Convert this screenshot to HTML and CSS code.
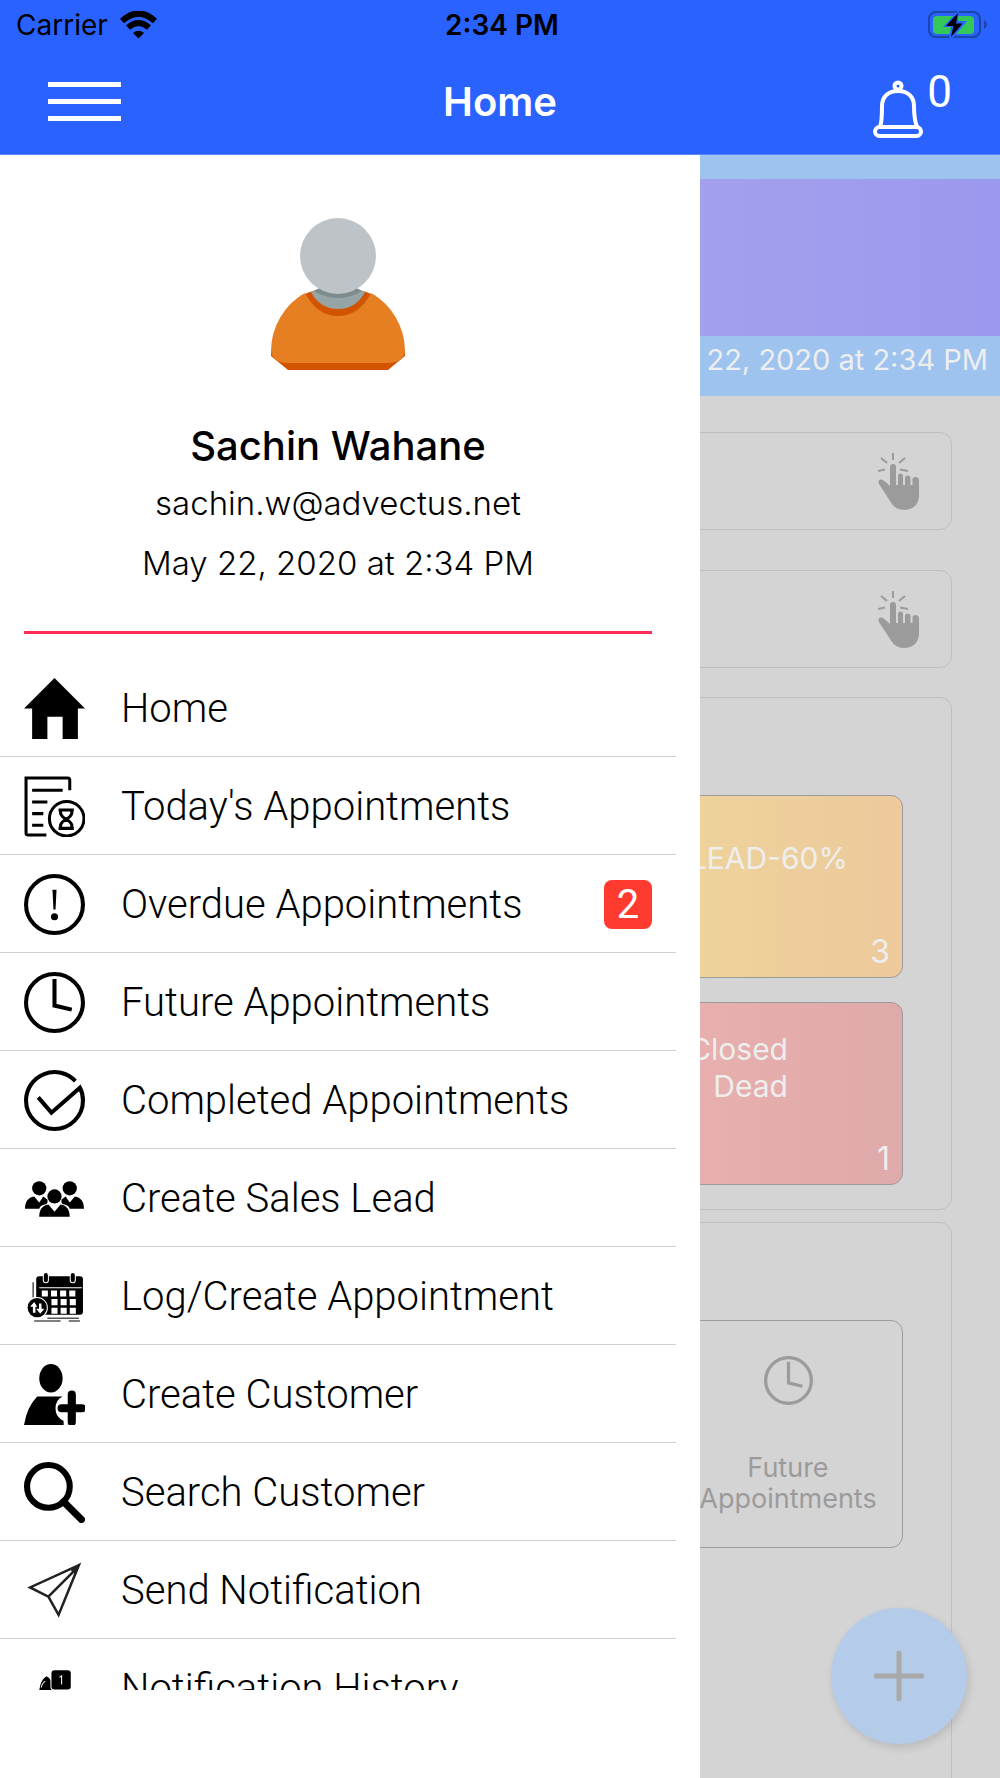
FILE: index.html
```html
<!DOCTYPE html>
<html lang="en">
<head>
    <meta charset="utf-8">
    <meta name="viewport" content="width=device-width, initial-scale=1.0">
    <title>Home</title>
    <link rel="stylesheet" href="styles.css">
</head>

<body>
    <header class="header">
        <div class="status-bar">
            <div class="carrier">
                <span>Carrier</span>
                <svg class="wifi" viewBox="0 0 37 28" aria-hidden="true">
                    <path d="M2 10Q18.500 -5 35 10" fill="none" stroke="#000" stroke-width="6" />
                    <path d="M8 16.500Q18.500 7.500 29 16.500" fill="none" stroke="#000" stroke-width="6" />
                    <path d="M13 22Q18.500 17.500 24 22L18.500 27.500Z" />
                </svg>
            </div>
            <div class="clock">2:34 PM</div>
            <svg class="battery" viewBox="0 0 60 30" aria-hidden="true">
                <rect x="1" y="2" width="51" height="25" rx="7" fill="none" stroke="#1b45a8" stroke-width="2" />
                <rect x="5" y="6" width="41" height="18" rx="4" fill="#34c759" />
                <path d="M56 10Q59 12 59 14.500Q59 17 56 19Z" fill="#1b45a8" />
                <path d="M31 0L15 17H23L21 29H24L39 11H30L31 0Z" fill="#2962ff" />
                <path d="M30 3L18 16H25.500L23 27L34.500 13.500H28Z" />
            </svg>
        </div>
        <div class="nav-bar">
            <button class="menu-button" type="button" aria-label="Menu">
                <span></span><span></span><span></span>
            </button>
            <h1 class="title">Home</h1>
            <button class="bell-button" type="button" aria-label="Notifications">
                <svg class="bell" viewBox="0 0 50 58" aria-hidden="true">
                    <g fill="none" stroke="#fff" stroke-width="4">
                        <circle cx="25" cy="6" r="3.500" />
                        <path d="M7 47C9 42 9 36 9 26C9 16 16 11 25 11C34 11 41 16 41 26C41 36 42 42 44 47" />
                        <rect x="2" y="47" width="46" height="9" rx="4.500" />
                    </g>
                </svg>
                <span class="bell-count">0</span>
            </button>
        </div>
    </header>

    <div class="container">
        <!-- Home screen, dimmed under the drawer -->
        <main class="home">
            <div class="banner"></div>
            <p class="banner-date">22, 2020 at 2:34 PM</p>

            <div class="cards">
                <div class="card tap-card">
                    <svg class="hand" viewBox="0 0 41 57" aria-hidden="true">
                        <path d="M15 0V7M3 5L9 10M27 5L21 10M0 18L7 16.500M22 16.500L30 18" fill="none" stroke="#9b9b9b" stroke-width="2" />
                        <path d="M12 32V14Q12 11 15 11Q18 11 18 14V32H20V23Q20 20.500 22.500 20.500Q25 20.500 25 23V32H27V25Q27 22.500 29.500 22.500Q32.500 22.500 32.500 25V32H34.500V26Q35 24 37.500 24Q40.500 24 41 27V43Q40 56 27 57Q18 57 14 51L1 31Q-1 26 4 26.500Q7 28 12 33Z" fill="#9b9b9b" />
                    </svg>
                </div>
                <div class="card tap-card">
                    <svg class="hand" viewBox="0 0 41 57" aria-hidden="true">
                        <path d="M15 0V7M3 5L9 10M27 5L21 10M0 18L7 16.500M22 16.500L30 18" fill="none" stroke="#9b9b9b" stroke-width="2" />
                        <path d="M12 32V14Q12 11 15 11Q18 11 18 14V32H20V23Q20 20.500 22.500 20.500Q25 20.500 25 23V32H27V25Q27 22.500 29.500 22.500Q32.500 22.500 32.500 25V32H34.500V26Q35 24 37.500 24Q40.500 24 41 27V43Q40 56 27 57Q18 57 14 51L1 31Q-1 26 4 26.500Q7 28 12 33Z" fill="#9b9b9b" />
                    </svg>
                </div>

                <section class="card leads">
                    <div class="tile tile-lead">
                        <span class="tile-name">LEAD-60%</span>
                        <span class="tile-count">3</span>
                    </div>
                    <div class="tile tile-dead">
                        <span class="tile-name">Closed<br>Dead</span>
                        <span class="tile-count">1</span>
                    </div>
                </section>

                <section class="card appointments">
                    <div class="tile tile-future">
                        <svg class="future-icon" viewBox="0 0 60 60" aria-hidden="true">
                            <g fill="none" stroke="#9b9b9b" stroke-width="4">
                                <circle cx="30" cy="30" r="28" />
                                <path d="M30 7V33L47 37" />
                            </g>
                        </svg>
                        <span>Future<br>Appointments</span>
                    </div>
                </section>
            </div>

            <button class="add-button" type="button" aria-label="Add">
                <svg viewBox="0 0 50 50" aria-hidden="true">
                    <path d="M25 2V48M2 25H48" fill="none" stroke="#a9a9a9" stroke-width="5" stroke-linecap="round" />
                </svg>
            </button>
        </main>

        <!-- Side drawer -->
        <aside class="drawer">
            <div class="profile">
                <svg class="avatar" viewBox="0 0 136 152" aria-hidden="true">
                    <path d="M30 78Q68 60 106 78L100 102H36ZM1 133V138L18 152H118L135 138V133Z" fill="#d35400" />
                    <path d="M1 133A67 67 0 0 1 35 75Q47 98 68 98Q89 98 101 75A67 67 0 0 1 135 133Q133 145 118 145H18Q3 145 1 133Z" fill="#e67e22" />
                    <path d="M41 74L50 70H86L95 74Q86 91 68 91Q50 91 41 74Z" fill="#95a5a6" />
                    <path d="M44 73L50 70H86L92 73Q81 80 68 80Q55 80 44 73Z" fill="#7f8c8d" />
                    <circle cx="68" cy="38" r="38" fill="#bdc3c7" />
                </svg>
                <h2 class="name">Sachin Wahane</h2>
                <p class="email">sachin.w@advectus.net</p>
                <p class="date">May 22, 2020 at 2:34 PM</p>
            </div>

            <nav class="menu">
                <a class="menu-item" href="#">
                    <svg class="icon" viewBox="0 0 60 60" aria-hidden="true">
                        <path d="M30 0L60 30H53V60H38V38H23V60H8V30H0Z" />
                    </svg>
                    <span>Home</span>
                </a>
                <a class="menu-item" href="#">
                    <svg class="icon" viewBox="0 0 60 60" aria-hidden="true">
                        <g fill="none" stroke="#000" stroke-width="3">
                            <path d="M45 14V4Q45 2 43 2H2V56Q2 58 4 58H22" />
                            <path d="M8 14H38M8 25.500H23M8 37H19M8 48.500H19" />
                            <circle cx="42" cy="42" r="17" />
                            <path d="M34 33.500H49M34 51.500H49M36 34V37Q37 40 41.500 42.500Q37 45 36 48V51M47 34V37Q46 40 41.500 42.500Q46 45 47 48V51" />
                        </g>
                    </svg>
                    <span>Today's Appointments</span>
                </a>
                <a class="menu-item" href="#">
                    <svg class="icon" viewBox="0 0 60 60" aria-hidden="true">
                        <circle cx="30" cy="30" r="28" fill="none" stroke="#000" stroke-width="4" />
                        <path d="M28 15.500H32L31 35H29Z" />
                        <circle cx="30" cy="42" r="3.500" />
                    </svg>
                    <span>Overdue Appointments</span>
                    <span class="badge">2</span>
                </a>
                <a class="menu-item" href="#">
                    <svg class="icon" viewBox="0 0 60 60" aria-hidden="true">
                        <g fill="none" stroke="#000" stroke-width="4">
                            <circle cx="30" cy="30" r="28" />
                            <path d="M30 7V33L47 37" />
                        </g>
                    </svg>
                    <span>Future Appointments</span>
                </a>
                <a class="menu-item" href="#">
                    <svg class="icon" viewBox="0 0 60 60" aria-hidden="true">
                        <path d="M50.500 11A28 28 0 0 0 2 30A28 28 0 0 0 58 30Q58 23 55 17.500L27 42L14 27" fill="none" stroke="#000" stroke-width="4" />
                    </svg>
                    <span>Completed Appointments</span>
                </a>
                <a class="menu-item" href="#">
                    <svg class="icon" viewBox="0 0 60 60" aria-hidden="true">
                        <circle cx="15" cy="20" r="7" />
                        <circle cx="45" cy="20" r="7" />
                        <path d="M1 40C1 33 4 29 10 28L15 34L19 28L23 31Q24 36 20 36Q16 37 15 40Z" />
                        <path d="M59 40C59 33 56 29 50 28L45 34L41 28L37 31Q36 36 40 36Q44 37 45 40Z" />
                        <circle cx="30" cy="28" r="7" />
                        <path d="M15 48C15 41 18 37 24 36L30 43L36 36C42 37 45 41 45 48Z" />
                    </svg>
                    <span>Create Sales Lead</span>
                </a>
                <a class="menu-item" href="#">
                    <svg class="icon" viewBox="0 0 60 60" aria-hidden="true">
                        <rect x="12" y="10" width="46" height="38" rx="3" />
                        <path d="M15 21.500H57" stroke="#fff" stroke-width="1" />
                        <g stroke-linecap="round">
                            <path d="M21.500 9V14M48 9V14" stroke="#fff" stroke-width="6" />
                            <path d="M21.500 9V14M48 9V14" stroke="#000" stroke-width="4" />
                        </g>
                        <path d="M17.500 27H52M27 35.500H52M27 44H52" stroke="#fff" stroke-width="6" stroke-dasharray="6 3" />
                        <path d="M9 16V31M23 51.500H54M10 54H36M44 54H55" stroke="#555" stroke-width="1.500" />
                        <circle cx="13" cy="41" r="10.500" fill="#fff" />
                        <circle cx="13" cy="41" r="9.500" />
                        <path d="M10 46V38M16 37V44" stroke="#fff" stroke-width="2.500" />
                        <path d="M6 40L10 35.500L13 40ZM12 42H20L16 47Z" fill="#fff" />
                    </svg>
                    <span>Log/Create Appointment</span>
                </a>
                <a class="menu-item" href="#">
                    <svg class="icon" viewBox="0 0 60 60" aria-hidden="true">
                        <ellipse cx="26.500" cy="14" rx="11.500" ry="14" />
                        <path d="M0 60Q3 42 13 32H38Q31 35 31 44Q31 52 39 56V60Z" />
                        <path d="M47 30V57M37 43.500H57" stroke="#000" stroke-width="8" stroke-linecap="round" />
                    </svg>
                    <span>Create Customer</span>
                </a>
                <a class="menu-item" href="#">
                    <svg class="icon" viewBox="0 0 60 60" aria-hidden="true">
                        <circle cx="24" cy="24" r="21" fill="none" stroke="#000" stroke-width="6" />
                        <path d="M39 39L56.500 56.500" stroke="#000" stroke-width="7" stroke-linecap="round" />
                    </svg>
                    <span>Search Customer</span>
                </a>
                <a class="menu-item" href="#">
                    <svg class="icon" viewBox="0 0 60 60" aria-hidden="true">
                        <path d="M54 5L6 27L24 36L34 54ZM24 36L53 7" fill="none" stroke="#222" stroke-width="2.500" />
                        <path d="M55 4L46 10L51 15Z" fill="#222" />
                    </svg>
                    <span>Send Notification</span>
                </a>
                <a class="menu-item" href="#">
                    <svg class="icon" viewBox="0 0 60 60" aria-hidden="true">
                        <path d="M10 46Q14 42 15 32Q16 22 22 18Q27 20 30 30Q40 32 44 46Z" />
                        <path d="M17 29Q18 24 21 23" fill="none" stroke="#fff" stroke-width="1" />
                        <rect x="26" y="11" width="21" height="21" rx="4" fill="#fff" />
                        <rect x="27" y="12" width="19" height="19" rx="3" />
                        <path d="M35 19L37 17.500V26" fill="none" stroke="#fff" stroke-width="1" />
                    </svg>
                    <span>Notification History</span>
                </a>
            </nav>
        </aside>
    </div>
</body>
</html>
```
FILE: styles.css
```css
* {
    box-sizing: border-box;
}

body {
    --blue: #2962ff;
    --dim-bg: #d4d4d4;
    --dim-border: #bfbfbf;
    --dim-text: #9b9b9b;
    --dim-white: #eeeeee;

    margin: 0;
    height: 100vh;
    display: flex;
    flex-direction: column;
    overflow: hidden;
    font-family: Inter, "Liberation Sans", sans-serif;
    color: #000;
    background-color: #fff;
}

h1, h2, p {
    margin: 0;
}

button {
    padding: 0;
    border: none;
    background: none;
    font: inherit;
    color: inherit;
    cursor: pointer;
}

/* Header */
.header {
    background-color: var(--blue);
    border-bottom: 1px solid #5b86ff;
    flex-shrink: 0;
}

.status-bar,
.nav-bar {
    display: grid;
    grid-template-columns: 1fr auto 1fr;
    align-items: center;
}

.status-bar {
    height: 50px;
    padding: 0 12px 0 16px;
    font-size: 28px;
}

.carrier {
    display: flex;
    align-items: center;
    gap: 12px;
}

.wifi {
    width: 37px;
    height: 28px;
}

.clock {
    font-weight: 600;
}

.battery {
    width: 60px;
    height: 30px;
    justify-self: end;
}

.nav-bar {
    height: 104px;
    padding: 0 48px 2px;
}

.menu-button {
    width: 73px;
    display: flex;
    flex-direction: column;
    gap: 12px;
}

.menu-button span {
    height: 5px;
    width: 100%;
    background-color: #fff;
}

.title {
    font-size: 40px;
    font-weight: 600;
    color: #fff;
}

.bell-button {
    justify-self: end;
    display: flex;
    align-items: flex-end;
    gap: 4px;
    padding-top: 6px;
    color: #fff;
}

.bell {
    width: 50px;
    height: 58px;
}

.bell-count {
    font-family: Roboto, sans-serif;
    font-size: 44px;
    line-height: 44px;
    padding-bottom: 24px;
}

/* Drawer lies over the home screen */
.container {
    flex: 1;
    min-height: 0;
    display: grid;
    grid-template-rows: minmax(0, 1fr);
    grid-template-columns: minmax(0, 1fr);
}

.home,
.drawer {
    grid-area: 1 / 1;
}

/* Home screen */
.home {
    position: relative;
    overflow: hidden;
    background-color: var(--dim-bg);
}

.banner {
    height: 181px;
    border-top: 24px solid #9dc3ee;
    background: linear-gradient(90deg, #b5b0ea, #9b99ee);
}

.banner-date {
    height: 60px;
    padding: 7px 12px;
    font-size: 29px;
    line-height: 34px;
    text-align: right;
    color: var(--dim-white);
    background-color: #9dc3ee;
}

.cards {
    padding: 36px 48px 0;
    display: flex;
    flex-direction: column;
}

.card {
    border: 1px solid var(--dim-border);
    border-radius: 12px;
}

.tap-card {
    height: 98px;
    margin-bottom: 40px;
    padding-right: 32px;
    display: flex;
    align-items: center;
    justify-content: flex-end;
}

.tap-card + .leads {
    margin-top: -11px;
}

.hand {
    width: 41px;
    height: 57px;
}

.leads {
    margin-bottom: 12px;
    padding: 97px 48px 24px;
    display: flex;
    flex-direction: column;
    gap: 24px;
}

.tile {
    border: 1px solid var(--dim-text);
    border-radius: 12px;
}

.tile-lead,
.tile-dead {
    height: 183px;
    padding: 12px;
    display: flex;
    flex-direction: column;
    justify-content: space-between;
    align-items: flex-end;
    color: var(--dim-white);
}

.tile-lead {
    background: linear-gradient(90deg, #eedba0, #eed49c 70%, #edc99b);
}

.tile-dead {
    background: linear-gradient(90deg, #edb6b0, #e9b0ae 70%, #dfaaaa);
}

.tile-name {
    font-size: 30px;
    line-height: 37px;
}

.tile-lead .tile-name {
    padding: 32px 42px 0 0;
}

.tile-dead .tile-name {
    padding: 16px 102px 0 0;
    text-align: right;
}

.tile-count {
    font-size: 32px;
    line-height: 26px;
}

.appointments {
    height: 640px;
    padding: 97px 48px 0;
    display: flex;
    justify-content: flex-end;
    align-items: flex-start;
}

.tile-future {
    width: 230px;
    height: 228px;
    padding-top: 35px;
    display: flex;
    flex-direction: column;
    align-items: center;
    gap: 47px;
    font-size: 27px;
    line-height: 31px;
    text-align: center;
    color: var(--dim-text);
}

.future-icon {
    width: 49px;
    height: 49px;
}

.add-button {
    position: absolute;
    right: 33px;
    bottom: 34px;
    width: 136px;
    height: 136px;
    border-radius: 50%;
    background-color: #b4cbe9;
    box-shadow: 2px 4px 8px rgba(0, 0, 0, 0.12);
}

.add-button svg {
    display: block;
    width: 50px;
    height: 50px;
    margin: 0 auto;
}

/* Drawer */
.drawer {
    z-index: 1;
    width: 70%;
    padding-bottom: 88px;
    display: flex;
    flex-direction: column;
    background-color: #fff;
}

.profile {
    height: 479px;
    margin: 0 48px 0 24px;
    padding-top: 63px;
    display: flex;
    flex-direction: column;
    align-items: center;
    border-bottom: 3px solid #ff2d55;
    flex-shrink: 0;
}

.avatar {
    width: 136px;
    height: 152px;
    margin-bottom: 51px;
}

.name {
    font-size: 40px;
    line-height: 50px;
    font-weight: 500;
}

.email,
.date {
    font-size: 33px;
    line-height: 60px;
    font-weight: 300;
}

.email {
    padding-top: 2px;
}

.menu {
    flex: 1;
    min-height: 0;
    margin: 25px 24px 0 0;
    overflow: hidden;
}

.menu-item {
    height: 98px;
    padding: 2px 24px 0;
    display: flex;
    align-items: center;
    gap: 36px;
    border-bottom: 1px solid #cfcfcf;
    font-family: Roboto, "Liberation Sans", sans-serif;
    font-size: 40px;
    font-weight: 300;
    line-height: 48px;
    color: #000;
    text-decoration: none;
    white-space: nowrap;
}

.icon {
    width: 61px;
    height: 61px;
    flex-shrink: 0;
}

.badge {
    width: 48px;
    height: 49px;
    margin-left: auto;
    border-radius: 8px;
    background-color: #ff3b30;
    color: #fff;
    font-weight: 400;
    line-height: 50px;
    text-align: center;
}
```
